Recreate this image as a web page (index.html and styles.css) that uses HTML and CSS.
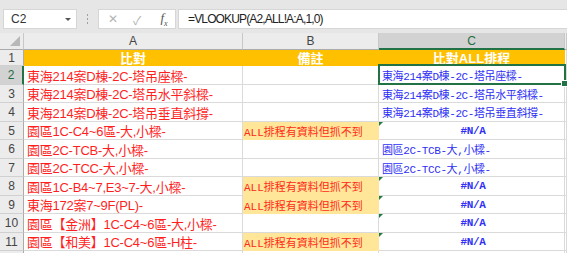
FILE: index.html
```html
<!DOCTYPE html>
<html>

<head>
    <title>比對</title>
    <link rel="stylesheet" href="styles.css">
</head>

<body>

    <!-- Строка формул -->
    <div class="toolbar">
        <div class="namebox">C2<span class="caret"></span></div>
        <div class="dots"><i></i><i></i><i></i></div>
        <div class="fxbox">
            <span class="fx-btn">&#x2715;</span>
            <span class="fx-btn">&#x2713;</span>
            <span class="fx-btn fx"><i>f</i><sub>x</sub></span>
        </div>
        <div class="formula">=VLOOKUP(A2,ALL!A:A,1,0)</div>
    </div>

    <!-- Таблица -->
    <div class="sheet">
        <div class="c hd corner"><span class="tri"></span></div>
        <div class="c hd">A</div>
        <div class="c hd">B</div>
        <div class="c hd hd-sel">C</div>
        <div class="c hd"></div>

        <div class="c rh">1</div>
        <div class="c top">比對</div>
        <div class="c top">備註</div>
        <div class="c top">比對ALL排程</div>
        <div class="c"></div>

        <div class="c rh rh-sel">2</div>
        <div class="c a">東海214案D棟-2C-塔吊座樑-</div>
        <div class="c"></div>
        <div class="c r sel">東海214案D棟-2C-塔吊座樑-</div>
        <div class="c"></div>

        <div class="c rh">3</div>
        <div class="c a">東海214案D棟-2C-塔吊水平斜樑-</div>
        <div class="c"></div>
        <div class="c r">東海214案D棟-2C-塔吊水平斜樑-</div>
        <div class="c"></div>

        <div class="c rh">4</div>
        <div class="c a">東海214案D棟-2C-塔吊垂直斜撐-</div>
        <div class="c"></div>
        <div class="c r">東海214案D棟-2C-塔吊垂直斜撐-</div>
        <div class="c"></div>

        <div class="c rh">5</div>
        <div class="c a">園區1C-C4~6區-大,小樑-</div>
        <div class="c note">ALL排程有資料但抓不到</div>
        <div class="c r na">#N/A</div>
        <div class="c"></div>

        <div class="c rh">6</div>
        <div class="c a">園區2C-TCB-大,小樑-</div>
        <div class="c"></div>
        <div class="c r">園區2C-TCB-大,小樑-</div>
        <div class="c"></div>

        <div class="c rh">7</div>
        <div class="c a">園區2C-TCC-大,小樑-</div>
        <div class="c"></div>
        <div class="c r">園區2C-TCC-大,小樑-</div>
        <div class="c"></div>

        <div class="c rh">8</div>
        <div class="c a">園區1C-B4~7,E3~7-大,小樑-</div>
        <div class="c note">ALL排程有資料但抓不到</div>
        <div class="c r na">#N/A</div>
        <div class="c"></div>

        <div class="c rh">9</div>
        <div class="c a">東海172案7~9F(PL)-</div>
        <div class="c note">ALL排程有資料但抓不到</div>
        <div class="c r na">#N/A</div>
        <div class="c"></div>

        <div class="c rh">10</div>
        <div class="c a">園區【金洲】1C-C4~6區-大,小樑-</div>
        <div class="c"></div>
        <div class="c r na">#N/A</div>
        <div class="c"></div>

        <div class="c rh">11</div>
        <div class="c a">園區【和美】1C-C4~6區-H柱-</div>
        <div class="c note">ALL排程有資料但抓不到</div>
        <div class="c r na">#N/A</div>
        <div class="c"></div>

        <!-- Наступний рядок, обрізаний краєм -->
        <div class="c rh"></div>
        <div class="c"></div>
        <div class="c"></div>
        <div class="c"></div>
        <div class="c"></div>
    </div>

</body>

</html>
```

FILE: styles.css
```css
body { /* Вся сторінка */
    margin: 0;
    width: 567px;
    height: 253px;
    overflow: hidden;
    background: #fff;
    font-family: "Liberation Sans", "Noto Sans CJK TC", sans-serif;
}

/* Строка формул */
.toolbar {
    height: 33px;
    box-sizing: border-box;
    padding: 9px 0 0 3px;
    background: #e6e6e6;
    display: flex;
    align-items: flex-start;
}

.namebox {
    width: 74px;
    height: 20px;
    box-sizing: border-box;
    background: #fff;
    border: 1px solid #d6d6d6;
    font-size: 12px;
    color: #333;
    padding-left: 7px;
    display: flex;
    align-items: center;
    justify-content: space-between;
}

.caret {
    width: 0;
    height: 0;
    margin-right: 5px;
    border-left: 3px solid transparent;
    border-right: 3px solid transparent;
    border-top: 3px solid #555;
}

.dots {
    width: 21px;
    height: 20px;
    display: flex;
    flex-direction: column;
    align-items: center;
    justify-content: center;
    gap: 2px;
}

.dots i {
    width: 1px;
    height: 2px;
    background: #a0a0a0;
}

.fxbox {
    width: 78px;
    height: 20px;
    box-sizing: border-box;
    background: #fff;
    border: 1px solid #d6d6d6;
    display: flex;
    align-items: center;
    padding-left: 7px;
    gap: 10px;
}

.fx-btn {
    width: 14px;
    text-align: center;
    font-size: 12px;
    color: #b4b4b4;
}

.fx {
    color: #555;
    font-family: "Liberation Serif", serif;
    font-size: 13px;
    margin-left: 3px;
}

.fx sub {
    font-size: 8px;
    font-style: italic;
}

.formula {
    flex: 1;
    height: 20px;
    margin-left: 2px;
    box-sizing: border-box;
    background: #fff;
    border: 1px solid #d6d6d6;
    border-right: none;
    padding-left: 9px;
    font-size: 12px;
    letter-spacing: -0.85px;
    color: #222;
    display: flex;
    align-items: center;
}

/* Таблиця */
.sheet {
    display: grid;
    grid-template-columns: 24px 219px 136px 186px 2px;
    grid-template-rows: 17px 16px 19px 18px 19px 18px 19px 18px 19px 18px 19px 18px 19px;
}

.c {
    position: relative;
    box-sizing: border-box;
    border-right: 1px solid #dadada;
    border-bottom: 1px solid #dadada;
    white-space: nowrap;
    display: flex;
    align-items: center;
    font-size: 13px;
}

.hd {
    background: #ececec;
    border-right-color: #c8c8c8;
    border-bottom-color: #ababab;
    justify-content: center;
    font-size: 12px;
    color: #444;
}

.hd-sel {
    background: #d2d2d2;
    color: #1f6e43;
    border-bottom: 2px solid #217346;
}

.corner .tri {
    position: absolute;
    right: 3px;
    bottom: 3px;
    width: 0;
    height: 0;
    border-left: 10px solid transparent;
    border-bottom: 10px solid #b8b8b8;
}

.rh {
    background: #ececec;
    border-right-color: #ababab;
    border-bottom-color: #d0d0d0;
    justify-content: center;
    font-size: 12px;
    color: #444;
}

.rh-sel {
    background: #d2d2d2;
    color: #1f6e43;
    border-right: 2px solid #217346;
}

.top {
    background: #ffc000;
    border-color: #ffc000;
    color: #fff;
    font-weight: bold;
    justify-content: center;
}

.a {
    padding-left: 3px;
    color: #ff1f1f;
    letter-spacing: -0.25px;
}

.note {
    padding-left: 1px;
    background: #ffe699;
    border-color: #ffe699;
    color: #ff2a1a;
    font-family: "Liberation Mono", "Noto Sans CJK TC", monospace;
    font-size: 11px;
}

.r {
    padding-left: 3px;
    color: #2f2ff5;
    font-family: "Liberation Mono", "Noto Sans CJK TC", monospace;
    font-size: 11px;
    letter-spacing: -0.4px;
}

.na {
    justify-content: center;
    font-weight: bold;
}

.na::before { /* Зелений трикутник помилки */
    content: "";
    position: absolute;
    left: 0;
    top: 0;
    border-top: 4px solid #1e7b45;
    border-right: 4px solid transparent;
}

.sel::after { /* Рамка виділеної комірки */
    content: "";
    position: absolute;
    left: -1px;
    top: -2px;
    right: -2px;
    bottom: -1px;
    border: 2px solid #217346;
    z-index: 2;
}

.sel::before { /* Маркер заповнення */
    content: "";
    position: absolute;
    right: -4px;
    bottom: -3px;
    width: 5px;
    height: 5px;
    background: #217346;
    border: 1px solid #fff;
    z-index: 3;
}
```
